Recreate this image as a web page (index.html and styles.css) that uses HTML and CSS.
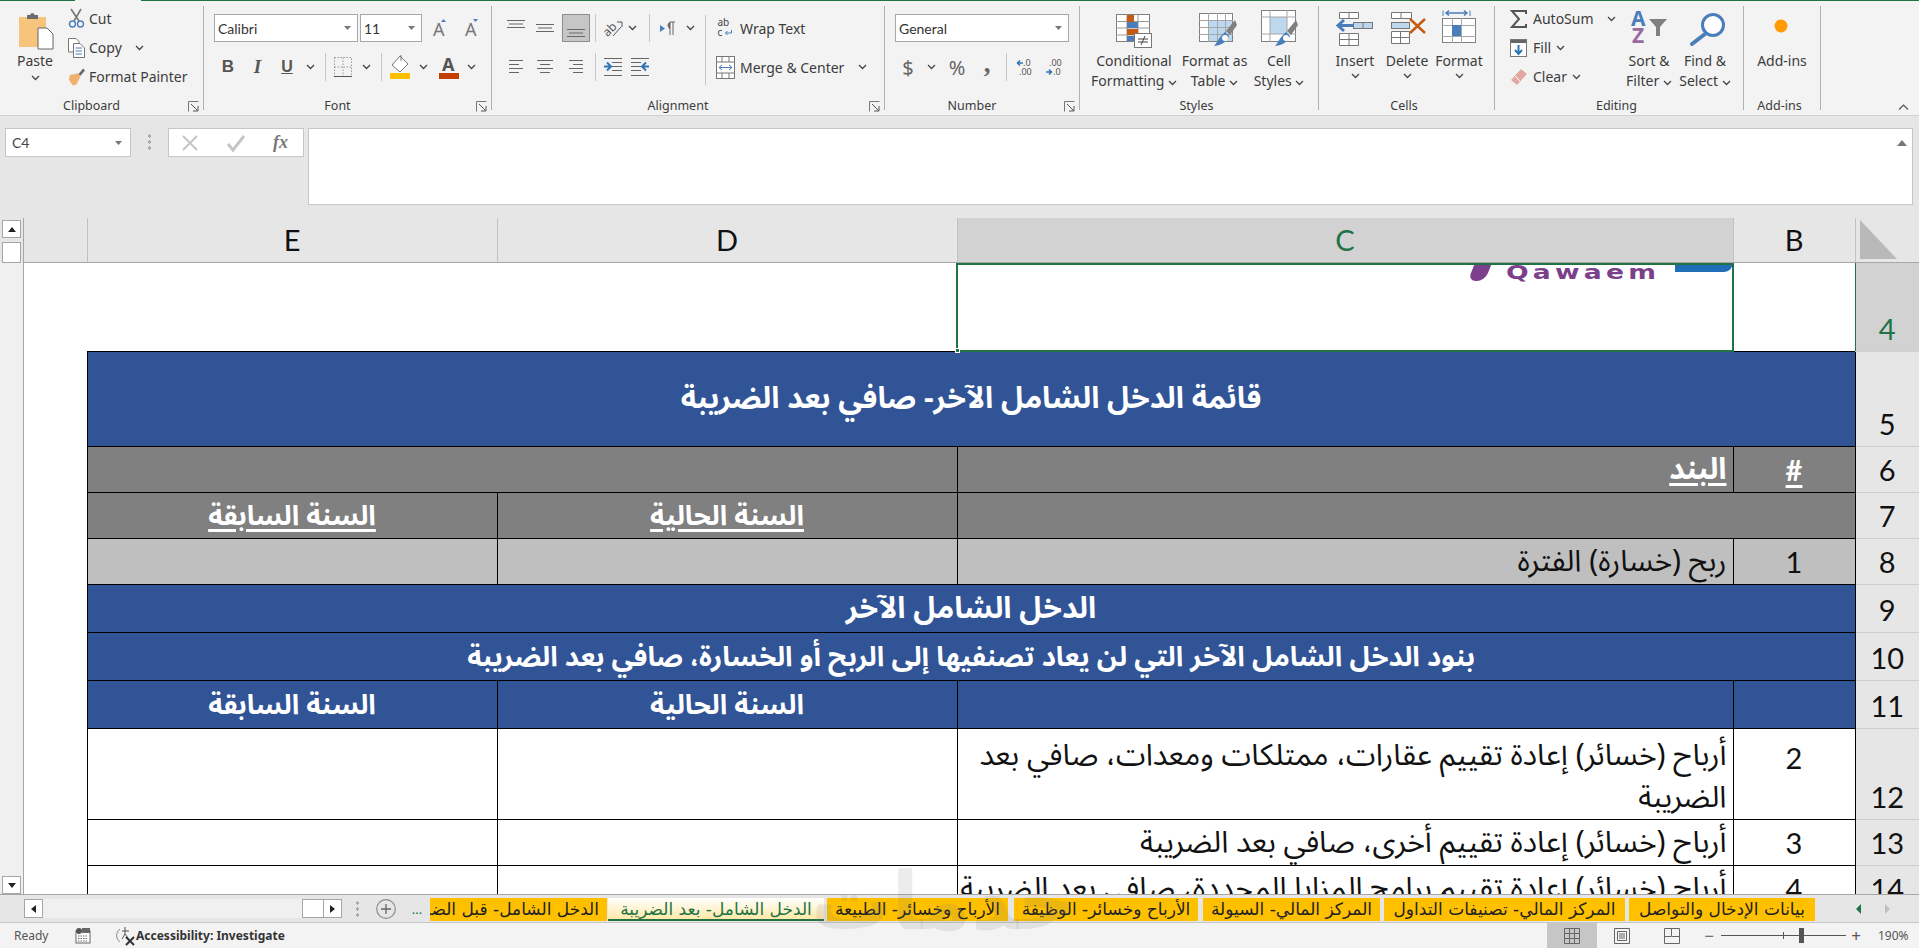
FILE: index.html
```html
<!DOCTYPE html>
<html lang="en">
<head>
<meta charset="utf-8">
<title>Excel</title>
<link rel="stylesheet" href="styles.css">
</head>
<body>
<svg class="defs" width="0" height="0">
  <symbol id="chev" viewBox="0 0 9 6"><polyline points="1,1 4.5,4.5 8,1" fill="none" stroke="#444" stroke-width="1.3"/></symbol>
  <symbol id="launch" viewBox="0 0 11 11"><path d="M.5 10.5V.5H10.5" fill="none" stroke="#777"/><path d="M3 3L9.5 9.5M10 5V10H5" fill="none" stroke="#555"/></symbol>
  <symbol id="tri" viewBox="0 0 7 4"><path d="M0 0H7L3.5 4Z" fill="#777"/></symbol>
  <symbol id="lines" viewBox="0 0 18 8"><path d="M0 .5H18M2 4H16M0 7.5H18" stroke="#666" fill="none"/></symbol>
  <symbol id="brush" viewBox="0 0 24 28"><path d="M22 1L13 12L17 16L24 6Z" fill="#808080"/><path d="M12 13L16 17C14 22 10 26 1 27C4 24 6 18 12 13Z" fill="#4a7ebb"/><circle cx="12" cy="19" r="3" fill="#fff"/></symbol>
</svg>

<div class="tabline"><span class="tl1"></span><span class="tl2"></span><span class="tl3"></span></div>

<section class="ribbon">
  <div class="group g-clip">
    <div class="gbody clipbody">
      <div class="big paste">
        <svg class="paste-ic" width="36" height="39" viewBox="0 0 36 39"><rect x="1" y="6" width="27" height="30" fill="#f6c47b"/><path d="M9 8V4H12Q14 0 17 4H20V8Z" fill="#6d6d6d"/><path d="M20 23H29L35 29V44H20Z" transform="translate(0 -6)" fill="#fff" stroke="#666"/></svg>
        <span class="lbl">Paste</span>
        <svg class="chev chev-b"><use href="#chev"/></svg>
      </div>
      <div class="smalls">
        <div class="sm"><svg class="sm-ic" width="17" height="19" viewBox="0 0 17 19"><path d="M3 0L11 12M13 0L6 12" stroke="#777" stroke-width="1.6" fill="none"/><circle cx="4.5" cy="15" r="3" fill="none" stroke="#4a7ebb" stroke-width="1.4"/><circle cx="12.5" cy="15" r="3" fill="none" stroke="#4a7ebb" stroke-width="1.4"/></svg><span>Cut</span></div>
        <div class="sm"><svg class="sm-ic" width="17" height="20" viewBox="0 0 17 20"><path d="M.5.5H8L11 3.5V14H.5Z" fill="#fff" stroke="#777"/><path d="M5.5 5.5H12L16.5 10V19.5H5.5Z" fill="#fff" stroke="#777"/><path d="M7.5 10H14M7.5 13H14M7.5 16H14" stroke="#4a7ebb"/></svg><span>Copy</span><svg class="chev chev-copy"><use href="#chev"/></svg></div>
        <div class="sm"><svg class="sm-ic" width="18" height="18" viewBox="0 0 18 18"><path d="M11 6L16 0L18 2L13 8Z" fill="#666"/><path d="M2 7L11 5L13 9L9 17L5 18L1 12Z" fill="#f0b070"/></svg><span>Format Painter</span></div>
      </div>
    </div>
    <div class="glabel"><span class="gname">Clipboard</span><svg class="launch"><use href="#launch"/></svg></div>
  </div>

  <div class="group g-font">
    <div class="gbody rows">
      <div class="font-r1">
        <div class="combo"><span>Calibri</span><svg class="tri"><use href="#tri"/></svg></div>
        <div class="combo"><span>11</span><svg class="tri"><use href="#tri"/></svg></div>
        <div class="c"><svg width="16" height="18" viewBox="0 0 16 18"><text class="aa" x="1" y="17">A</text><path d="M9 3L11.500 0L14 3Z" fill="#4a7ebb"/></svg></div>
        <div class="c"><svg width="16" height="18" viewBox="0 0 16 18"><text class="aa" x="1" y="17">A</text><path d="M9 0H14L11.500 3Z" fill="#4a7ebb"/></svg></div>
      </div>
      <div class="font-r2">
        <div class="c fb">B</div><div class="c fi">I</div><div class="c fu">U</div>
        <div class="c"><svg class="chev"><use href="#chev"/></svg></div>
        <div class="c vs"></div>
        <div class="c"><svg width="18" height="20" viewBox="0 0 18 20"><path d="M.5.5H17.500V19M.5 .5V19M9 .5V19M.5 10H17.500" stroke="#999" stroke-dasharray="1.500 1.500" fill="none"/><path d="M0 19.500H18" stroke="#555"/></svg></div>
        <div class="c"><svg class="chev"><use href="#chev"/></svg></div>
        <div class="c vs"></div>
        <div class="c"><svg width="20" height="24" viewBox="0 0 20 24"><path d="M10 1L18 9L10 17L2 10Z" fill="#fff" stroke="#777"/><path d="M11 0V6" stroke="#777"/><rect y="18" width="20" height="6" fill="#ffc000"/></svg></div>
        <div class="c"><svg class="chev"><use href="#chev"/></svg></div>
        <div class="c"><svg width="20" height="24" viewBox="0 0 20 24"><text class="ac" x="3" y="16">A</text><rect y="18" width="20" height="6" fill="#c43e00"/></svg></div>
        <div class="c"><svg class="chev"><use href="#chev"/></svg></div>
      </div>
    </div>
    <div class="glabel"><span class="gname">Font</span><svg class="launch"><use href="#launch"/></svg></div>
  </div>

  <div class="group g-align">
    <div class="gbody albody">
      <div class="rows">
        <div class="al-r1">
          <div class="c up"><svg class="ln"><use href="#lines"/></svg></div>
          <div class="c"><svg class="ln"><use href="#lines"/></svg></div>
          <div class="c sel dn"><svg class="ln"><use href="#lines"/></svg></div>
          <div class="c vs"></div>
          <div class="c"><svg width="19" height="19" viewBox="0 0 19 19"><text class="orient" transform="rotate(-45 7 12)" x="0" y="14">ab</text><path d="M9 17L17 8M13 3H18V8" stroke="#555" fill="none"/></svg></div>
          <div class="c"><svg class="chev"><use href="#chev"/></svg></div>
          <div class="c vs"></div>
          <div class="c"><svg width="15" height="13" viewBox="0 0 15 13"><path d="M0 3L5 6.500L0 10Z" fill="#4a7ebb"/><path d="M10 0H15M10 0V13M13 0V13M10 0Q6 3 10 7" stroke="#666" fill="#666"/></svg></div>
          <div class="c"></div>
          <div class="c"><svg class="chev"><use href="#chev"/></svg></div>
        </div>
        <div class="al-r2">
          <div class="c"><svg width="15" height="14" viewBox="0 0 15 14"><path d="M0 .5H14M0 4.500H10M0 8.500H14M0 12.500H10" stroke="#666"/></svg></div>
          <div class="c"><svg width="16" height="14" viewBox="0 0 16 14"><path d="M0 .5H16M3 4.500H13M0 8.500H16M3 12.500H13" stroke="#666"/></svg></div>
          <div class="c"><svg width="15" height="14" viewBox="0 0 15 14"><path d="M1 .5H15M5 4.500H15M1 8.500H15M5 12.500H15" stroke="#666"/></svg></div>
          <div class="c vs"></div>
          <div class="c"><svg width="18" height="19" viewBox="0 0 18 19"><path d="M0 .5H18M8 4.500H18M8 8.500H18M8 12.500H18M0 17.500H18" stroke="#666"/><path d="M0 8.500H6M3 4.500L7 8.500L3 12.500" stroke="#2f75b5" stroke-width="2" fill="none"/></svg></div>
          <div class="c"><svg width="18" height="19" viewBox="0 0 18 19"><path d="M0 .5H18M0 4.500H10M0 8.500H10M0 12.500H10M0 17.500H18" stroke="#666"/><path d="M18 8.500H12M15 4.500L11 8.500L15 12.500" stroke="#2f75b5" stroke-width="2" fill="none"/></svg></div>
        </div>
      </div>
      <div class="bigsep"></div>
      <div class="rows">
        <div class="wm"><svg class="wm-ic" width="16" height="20" viewBox="0 0 16 20"><text class="wt" x="0" y="8">ab</text><text class="wt" x="0" y="18">c</text><path d="M14 12V15H8M10 13L8 15L10 17" stroke="#4a7ebb" fill="none"/></svg><span>Wrap Text</span></div>
        <div class="wm"><svg class="wm-ic" width="19" height="23" viewBox="0 0 19 23"><rect x=".5" y=".5" width="18" height="22" fill="#fff" stroke="#777"/><path d="M0 6H19M0 17H19M6 .5V6M13 .5V6M6 17V23M13 17V23" stroke="#777"/><path d="M3 11.500H16M6 9L3 11.500L6 14M13 9L16 11.500L13 14" stroke="#4a7ebb" fill="none"/></svg><span>Merge &amp; Center</span><svg class="chev chev-merge"><use href="#chev"/></svg></div>
      </div>
    </div>
    <div class="glabel"><span class="gname">Alignment</span><svg class="launch"><use href="#launch"/></svg></div>
  </div>

  <div class="group g-num">
    <div class="gbody rows">
      <div class="combo combo-num"><span>General</span><svg class="tri"><use href="#tri"/></svg></div>
      <div class="num-r2">
        <div class="c sym">$</div>
        <div class="c"><svg class="chev"><use href="#chev"/></svg></div>
        <div class="c sym">%</div>
        <div class="c sym comma">,</div>
        <div class="c vs"></div>
        <div class="c"><svg width="16" height="17" viewBox="0 0 16 17"><text class="dec" x="6" y="7">.0</text><text class="dec" x="2" y="16">.00</text><path d="M6 4H1M3 1.500L.5 4L3 6.500" stroke="#2f75b5" stroke-width="1.500" fill="none"/></svg></div>
        <div class="c"><svg width="16" height="17" viewBox="0 0 16 17"><text class="dec" x="3" y="7">.00</text><text class="dec" x="7" y="16">.0</text><path d="M0 13H5M3 10.500L5.500 13L3 15.500" stroke="#2f75b5" stroke-width="1.500" fill="none"/></svg></div>
      </div>
    </div>
    <div class="glabel"><span class="gname">Number</span><svg class="launch"><use href="#launch"/></svg></div>
  </div>

  <div class="group g-styles">
    <div class="gbody bigs">
      <div class="big b-cf">
        <svg class="big-ic" width="44" height="41" viewBox="0 0 44 41"><rect x="4.500" y="4.500" width="33" height="27" fill="#fff" stroke="#808080"/><path d="M4 11.500H38M4 18H38M4 25H38M15 4V31M26 4V31" stroke="#999"/><rect x="15" y="5" width="7" height="7" fill="#c55a11"/><rect x="15" y="12" width="11" height="6" fill="#4a7ebb"/><rect x="15" y="19" width="11" height="6" fill="#c55a11"/><rect x="15" y="26" width="7" height="5" fill="#4a7ebb"/><rect x="22.500" y="23.500" width="17" height="14" fill="#fff" stroke="#777"/><path d="M26 29H36M26 32H36M33 26L29 35" stroke="#444" fill="none"/></svg>
        <span class="lbl">Conditional<br>Formatting <svg class="chev"><use href="#chev"/></svg></span>
      </div>
      <div class="big b-ft">
        <svg class="big-ic" width="44" height="41" viewBox="0 0 44 41"><rect x="6.500" y="3.500" width="33" height="28" fill="#fff" stroke="#808080"/><rect x="16" y="10" width="23" height="21" fill="#bdd7ee"/><path d="M6 10.500H40M6 17.500H40M6 24.500H40M15.500 3V32M24.500 3V32M32.500 3V32" stroke="#a6a6a6"/><svg x="20" y="9" width="24" height="28" viewBox="0 0 24 28"><use href="#brush"/></svg></svg>
        <span class="lbl">Format as<br>Table <svg class="chev"><use href="#chev"/></svg></span>
      </div>
      <div class="big b-cs">
        <svg class="big-ic" width="44" height="41" viewBox="0 0 44 41"><rect x="4.500" y=".5" width="34" height="31" fill="#fff" stroke="#808080"/><rect x="13" y="7" width="17" height="17" fill="#bdd7ee"/><path d="M4 7H39M4 24H39M13 0V32M30 0V32" stroke="#a6a6a6"/><svg x="17" y="9" width="24" height="28" viewBox="0 0 24 28"><use href="#brush"/></svg></svg>
        <span class="lbl">Cell<br>Styles <svg class="chev"><use href="#chev"/></svg></span>
      </div>
    </div>
    <div class="glabel"><span class="gname">Styles</span></div>
  </div>

  <div class="group g-cells">
    <div class="gbody bigs">
      <div class="big b-cell">
        <svg class="big-ic" width="44" height="41" viewBox="0 0 44 41"><path d="M6.500 2.500H25.500V8.500H6.500ZM16 2V8" fill="#fff" stroke="#777"/><rect x="20.500" y="12.500" width="19" height="6" fill="#bdd7ee" stroke="#777"/><path d="M30 12V18" stroke="#777"/><path d="M20 15.500H6M11 10L5 15.500L11 21" stroke="#4a7ebb" stroke-width="3" fill="none"/><path d="M6.500 23.500H25.500V35.500H6.500ZM16 23V36M6 29.500H26" fill="#fff" stroke="#777"/></svg>
        <span class="lbl">Insert</span><svg class="chev chev-c"><use href="#chev"/></svg>
      </div>
      <div class="big b-cell">
        <svg class="big-ic" width="44" height="41" viewBox="0 0 44 41"><path d="M6.500 2.500H26.500V8.500H6.500ZM16 2V8" fill="#fff" stroke="#777"/><rect x="6.500" y="12.500" width="18" height="6" fill="#bdd7ee" stroke="#777"/><path d="M6.500 21.500H24.500V33.500H6.500ZM15.500 21V34M6 27.500H25" fill="#fff" stroke="#777"/><path d="M25 9L40 23M40 9L25 23" stroke="#c55a11" stroke-width="2.500"/></svg>
        <span class="lbl">Delete</span><svg class="chev chev-c"><use href="#chev"/></svg>
      </div>
      <div class="big b-cell">
        <svg class="big-ic" width="44" height="41" viewBox="0 0 44 41"><path d="M6 .5V6M33 .5V6" stroke="#4a7ebb"/><path d="M9 3H30M12 .5L9 3L12 5.500M27 .5L30 3L27 5.500" stroke="#4a7ebb" stroke-width="1.500" fill="none"/><rect x="5.500" y="8.500" width="33" height="24" fill="#fff" stroke="#808080"/><path d="M5 15.500H39M5 26.500H39M15.500 8V33M24.500 8V33" stroke="#a6a6a6"/><rect x="15" y="15" width="9" height="11" fill="#4a7ebb"/></svg>
        <span class="lbl">Format</span><svg class="chev chev-c"><use href="#chev"/></svg>
      </div>
    </div>
    <div class="glabel"><span class="gname">Cells</span></div>
  </div>

  <div class="group g-edit">
    <div class="gbody editbody">
      <div class="smalls ed-smalls">
        <div class="sm"><svg class="sm-ed" width="17" height="18" viewBox="0 0 17 18"><path d="M16 4V1H2L9 9L2 17H16V14" fill="none" stroke="#555" stroke-width="2"/></svg><span>AutoSum</span><svg class="chev chev-auto"><use href="#chev"/></svg></div>
        <div class="sm"><svg class="sm-ed" width="17" height="18" viewBox="0 0 17 18"><rect x=".5" y=".5" width="16" height="17" fill="#fff" stroke="#777"/><rect x="1" y="1" width="15" height="3" fill="#666"/><path d="M8.500 6V15M5 11L8.500 15L12 11" stroke="#2f75b5" stroke-width="2" fill="none"/></svg><span>Fill</span><svg class="chev chev-s"><use href="#chev"/></svg></div>
        <div class="sm"><svg class="sm-ed" width="17" height="18" viewBox="0 0 17 18"><path d="M11 1L17 6L7 17L1 12Z" fill="#e0a8a0"/><path d="M5 8L10 13" stroke="#fff"/></svg><span>Clear</span><svg class="chev chev-s"><use href="#chev"/></svg></div>
      </div>
      <div class="big b-sort">
        <svg class="big-ic" width="44" height="41" viewBox="0 0 44 41"><text class="az-a" x="4" y="16">A</text><text class="az-z" x="5" y="33">Z</text><path d="M22 9H40L33 17V26H29V17Z" fill="#808080"/></svg>
        <span class="lbl">Sort &amp;<br>Filter <svg class="chev"><use href="#chev"/></svg></span>
      </div>
      <div class="big b-find">
        <svg class="big-ic" width="44" height="41" viewBox="0 0 44 41"><circle cx="30" cy="15" r="10.500" fill="#fff" stroke="#4a7ebb" stroke-width="3"/><path d="M22 24L9 34" stroke="#4a7ebb" stroke-width="4" stroke-linecap="round"/></svg>
        <span class="lbl">Find &amp;<br>Select <svg class="chev"><use href="#chev"/></svg></span>
      </div>
    </div>
    <div class="glabel"><span class="gname">Editing</span></div>
  </div>

  <div class="group g-add">
    <div class="gbody bigs">
      <div class="big b-add">
        <svg class="big-ic" width="44" height="41" viewBox="0 0 44 41"><circle cx="21" cy="16" r="6.500" fill="#ff9a00"/></svg>
        <span class="lbl">Add-ins</span>
      </div>
    </div>
    <div class="glabel"><span class="gname">Add-ins</span></div>
  </div>
  <div class="collapse"><svg width="11" height="6" viewBox="0 0 11 6"><polyline points="1,5.500 5.500,1 10,5.500" fill="none" stroke="#555" stroke-width="1.200"/></svg></div>
</section>

<section class="fbar">
  <div class="namebox"><span>C4</span><svg class="tri"><use href="#tri"/></svg></div>
  <div class="dots dots-f"></div>
  <div class="fxbox">
    <svg width="16" height="16" viewBox="0 0 16 16"><path d="M1 1L15 15M15 1L1 15" stroke="#c6c6c6" stroke-width="2"/></svg>
    <svg width="18" height="16" viewBox="0 0 18 16"><path d="M1 9L6 15L17 1" stroke="#c6c6c6" stroke-width="3" fill="none"/></svg>
    <span class="fx">fx</span>
  </div>
  <div class="finput"><svg width="10" height="6" viewBox="0 0 10 6"><path d="M0 6L5 0L10 6Z" fill="#777"/></svg></div>
</section>

<main class="main">
  <div class="vscroll">
    <div class="sbtn"><svg width="8" height="5" viewBox="0 0 8 5"><path d="M0 5H8L4 0Z" fill="#222"/></svg></div>
    <div class="vthumb"></div>
    <div class="grow"></div>
    <div class="sbtn"><svg width="8" height="5" viewBox="0 0 8 5"><path d="M0 0H8L4 5Z" fill="#222"/></svg></div>
  </div>
  <div class="sheet">
    <table class="grid">
      <colgroup><col class="ca"><col class="ce"><col class="cd"><col class="cc"><col class="cb"><col class="cr"></colgroup>
      <tr class="h-head">
        <th class="colh blank"></th><th class="colh">E</th><th class="colh">D</th><th class="colh active">C</th><th class="colh">B</th>
        <th class="corner"><svg width="38" height="39" viewBox="0 0 38 39"><path d="M0 0L37 39H0Z" fill="#b9b9b9"/></svg></th>
      </tr>
      <tr class="h4">
        <td class="plain"></td><td class="plain"></td><td class="plain"></td>
        <td class="plain selcell">
          <div class="logo"><span class="swoosh"></span><span class="qaw">Qawaem</span><span class="lblue"></span></div>
          <div class="selbox"><span class="handle"></span></div>
        </td>
        <td class="plain"></td><th class="rowh active">4</th>
      </tr>
      <tr class="h5"><td class="plain"></td><td colspan="4" class="blue title" dir="rtl">قائمة الدخل الشامل الآخر- صافي بعد الضريبة</td><th class="rowh">5</th></tr>
      <tr class="h46"><td class="plain"></td><td colspan="2" class="grey"></td><td class="grey r b" dir="rtl"><u>البند</u></td><td class="grey ctr b n"><u>#</u></td><th class="rowh">6</th></tr>
      <tr class="h46"><td class="plain"></td><td class="grey ctr b sub" dir="rtl"><u>السنة السابقة</u></td><td class="grey ctr b sub" dir="rtl"><u>السنة الحالية</u></td><td colspan="2" class="grey"></td><th class="rowh">7</th></tr>
      <tr class="h46"><td class="plain"></td><td class="lg"></td><td class="lg"></td><td class="lg r" dir="rtl">ربح (خسارة) الفترة</td><td class="lg ctr n">1</td><th class="rowh">8</th></tr>
      <tr class="h48"><td class="plain"></td><td colspan="4" class="blue ctr b" dir="rtl">الدخل الشامل الآخر</td><th class="rowh">9</th></tr>
      <tr class="h48"><td class="plain"></td><td colspan="4" class="blue ctr b long" dir="rtl">بنود الدخل الشامل الآخر التي لن يعاد تصنفيها إلى الربح أو الخسارة، صافي بعد الضريبة</td><th class="rowh">10</th></tr>
      <tr class="h48"><td class="plain"></td><td class="blue ctr b sub" dir="rtl">السنة السابقة</td><td class="blue ctr b sub" dir="rtl">السنة الحالية</td><td class="blue"></td><td class="blue"></td><th class="rowh">11</th></tr>
      <tr class="h91"><td class="plain"></td><td class="wh"></td><td class="wh"></td><td class="wh r two" dir="rtl">أرباح (خسائر) إعادة تقييم عقارات، ممتلكات ومعدات، صافي بعد<br>الضريبة</td><td class="wh ctr top n">2</td><th class="rowh">12</th></tr>
      <tr class="h46"><td class="plain"></td><td class="wh"></td><td class="wh"></td><td class="wh r" dir="rtl">أرباح (خسائر) إعادة تقييم أخرى، صافي بعد الضريبة</td><td class="wh ctr n">3</td><th class="rowh">13</th></tr>
      <tr class="h46"><td class="plain"></td><td class="wh"></td><td class="wh"></td><td class="wh r" dir="rtl">أرباح (خسائر) إعادة تقييم برامج المزايا المحددة، صافي بعد الضريبة</td><td class="wh ctr n">4</td><th class="rowh">14</th></tr>
    </table>
  </div>
</main>

<section class="tabbar">
  <div class="sbtn sbtn-h"><svg width="5" height="8" viewBox="0 0 5 8"><path d="M5 0V8L0 4Z" fill="#222"/></svg></div>
  <div class="htrack"></div>
  <div class="hthumb"></div>
  <div class="sbtn sbtn-h"><svg width="5" height="8" viewBox="0 0 5 8"><path d="M0 0V8L5 4Z" fill="#222"/></svg></div>
  <div class="dots dots-t"></div>
  <svg class="plus" width="20" height="20" viewBox="0 0 20 20"><circle cx="10" cy="10" r="9.300" fill="none" stroke="#8c8c8c" stroke-width="1.200"/><path d="M10 5V15M5 10H15" stroke="#666" stroke-width="1.300"/></svg>
  <span class="more">...</span>
  <div class="tabs" dir="ltr">
    <div class="tab t7" dir="rtl">الدخل الشامل- قبل الضريبة</div>
    <div class="tab tab-active t6" dir="rtl">الدخل الشامل- بعد الضريبة</div>
    <div class="tab t5" dir="rtl">الأرباح وخسائر- الطبيعة</div>
    <div class="tab t4" dir="rtl">الأرباح وخسائر- الوظيفة</div>
    <div class="tab t3" dir="rtl">المركز المالي- السيولة</div>
    <div class="tab t2" dir="rtl">المركز المالي- تصنيفات التداول</div>
    <div class="tab t1" dir="rtl">بيانات الإدخال والتواصل</div>
  </div>
  <svg class="tabnav" width="5" height="10" viewBox="0 0 5 10"><path d="M5 0V10L0 5Z" fill="#217346"/></svg>
  <svg class="tabnav tabnav2" width="5" height="10" viewBox="0 0 5 10"><path d="M0 0V10L5 5Z" fill="#bfbfbf"/></svg>
</section>

<footer class="status">
  <span class="ready">Ready</span>
  <svg class="st-macro" width="14" height="15" viewBox="0 0 14 15"><rect y="3" width="14" height="12" fill="#fff" stroke="#666"/><circle cx="3" cy="3" r="3" fill="#555"/><rect x="6" width="8" height="5" fill="#666"/><path d="M2 8H12M2 10.500H12M2 13H12" stroke="#666" stroke-dasharray="1.500 1"/></svg>
  <svg class="st-acc" width="20" height="19" viewBox="0 0 20 19"><path d="M5 3A8 8 0 0 0 5 16" fill="none" stroke="#888"/><path d="M10 1V8M7 5H14M10 8L7 13M10 8L13 12" stroke="#555" fill="none"/><path d="M11 11L19 19M19 11L11 19" stroke="#333" stroke-width="2"/></svg>
  <b class="acc">Accessibility: Investigate</b>
  <div class="grow"></div>
  <div class="view view-on"><svg width="16" height="16" viewBox="0 0 16 16"><path d="M.5.5H15.500V15.500H.5ZM5.500 0V16M10.500 0V16M0 5.500H16M0 10.500H16" fill="none" stroke="#666"/></svg></div>
  <div class="view"><svg width="16" height="16" viewBox="0 0 16 16"><path d="M.5.5H15.500V15.500H.5Z" fill="none" stroke="#666"/><path d="M3.500 3.500H12.500V12.500H3.500ZM5 6H11M5 8H11M5 10H11" fill="none" stroke="#666"/></svg></div>
  <div class="view"><svg width="16" height="16" viewBox="0 0 16 16"><path d="M.5.5H15.500V15.500H.5ZM7.500 0V8.500H0M8 8.500H16" fill="none" stroke="#666"/></svg></div>
  <div class="zoomer">
    <span class="zbtn">−</span>
    <div class="slider"><span class="mid"></span><span class="knob"></span></div>
    <span class="zbtn">+</span>
    <span class="pct">190%</span>
  </div>
</footer>

<div class="watermark" dir="rtl">خدمات</div>
</body>
</html>
```
FILE: styles.css
```css
* { box-sizing: border-box; }
html, body { margin: 0; padding: 0; }
body {
  position: relative;
  width: 1919px;
  height: 948px;
  overflow: hidden;
  background: #f3f3f3;
  font-family: "Noto Sans", "DejaVu Sans", sans-serif;
  font-size: 14px;
  color: #3c3c3c;
  display: flex;
  flex-direction: column;
}
svg { overflow: visible; }
.defs { position: absolute; }
.chev { width: 9px; height: 6px; }
.launch { width: 11px; height: 11px; margin-right: 4px; }
.tri { width: 7px; height: 4px; }
.grow { flex: 1; }
svg text { font-family: "Noto Sans", sans-serif; }

.tabline { display: flex; height: 1px; flex: none; }
.tl1 { width: 75px; background: #217346; }
.tl2 { width: 66px; }
.tl3 { flex: 1; background: #217346; }

.ribbon {
  flex: none;
  height: 115px;
  display: flex;
  padding-top: 5px;
  background: #f3f3f3;
  border-bottom: 1px solid #d2d2d2;
  align-items: flex-start;
}
.group {
  height: 104px;
  display: flex;
  flex-direction: column;
  border-right: 1px solid #b1b1b1;
}
.g-clip { width: 204px; }
.g-font { width: 288px; }
.g-align { width: 393px; }
.g-num { width: 195px; }
.g-styles { width: 239px; }
.g-cells { width: 176px; }
.g-edit { width: 249px; }
.g-add { width: 77px; }
.gbody { height: 95px; flex: none; }
.glabel { height: 10px; display: flex; align-items: center; line-height: 10px; font-size: 12.5px; }
.gname { flex: 1; text-align: center; white-space: nowrap; padding-right: 5px; }
.collapse { flex: 1; display: flex; justify-content: flex-end; padding: 98px 10px 0 0; }

.rows { display: grid; grid-template-rows: 28px 28px; row-gap: 11px; padding-top: 8px; align-content: start; }
.c { display: flex; align-items: center; justify-content: center; min-width: 0; }
.vs::after { content: ""; width: 1px; height: 28px; background: #c6c6c6; }

.big { display: flex; flex-direction: column; align-items: center; text-align: center; flex: none; padding-top: 4px; }
.big-ic { height: 41px; flex: none; }
.lbl { line-height: 20px; white-space: nowrap; }
.bigs { display: flex; }

/* Clipboard */
.clipbody { display: flex; }
.paste { width: 66px; margin-left: 2px; }
.paste-ic { height: 41px; margin-left: 1px; }
.chev-b { margin-top: 4px; }
.smalls { display: grid; grid-template-rows: repeat(3, 29px); margin-top: -2px; }
.sm { display: flex; align-items: center; white-space: nowrap; }
.sm-ic { width: 21px; flex: none; padding-right: 4px; }
.chev-copy { margin-left: 13px; }

/* Font */
.g-font .rows { padding-left: 10px; }
.font-r1 { display: grid; grid-template-columns: 144px 62px 31px 29px; column-gap: 2px; }
.font-r2 { display: grid; grid-template-columns: 28px 31px 28px 18px 12px 24px 22px 8px 30px 16px 36px 8px; }
.combo {
  display: flex; align-items: center; justify-content: space-between;
  background: #fff; border: 1px solid #a8a8a8; padding: 0 6px 0 3px;
  font-family: "Lato", sans-serif; font-size: 14px; color: #333;
}
.combo-num { width: 174px; }
.g-num .rows { padding-left: 10px; }
.aa { font-size: 18px; fill: #777; }
.ac { font-size: 18px; font-weight: 700; fill: #555; }
.fb { font-family: "Liberation Sans", sans-serif; font-weight: 700; font-size: 17px; color: #555; }
.fi { font-family: "Liberation Serif", serif; font-style: italic; font-weight: 700; font-size: 19px; color: #555; }
.fu { font-family: "Liberation Sans", sans-serif; font-weight: 700; font-size: 16px; color: #555; text-decoration: underline; }

/* Alignment */
.albody { display: flex; padding-left: 10px; }
.al-r1 { display: grid; grid-template-columns: 28px 1px 28px 3px 28px 10px 26px 12px 22px 15px 8px 14px; }
.al-r1 > .c:nth-child(1) { grid-column: 1; }
.al-r1 > .c:nth-child(2) { grid-column: 3; }
.al-r1 > .c:nth-child(3) { grid-column: 5; }
.al-r1 > .c:nth-child(4) { grid-column: 6; }
.al-r1 > .c:nth-child(5) { grid-column: 7; }
.al-r1 > .c:nth-child(6) { grid-column: 8; }
.al-r1 > .c:nth-child(7) { grid-column: 9; }
.al-r1 > .c:nth-child(8) { grid-column: 10; }
.al-r1 > .c:nth-child(9) { grid-column: 11; }
.al-r1 > .c:nth-child(10) { grid-column: 12; }
.al-r2 { display: grid; grid-template-columns: 28px 30px 30px 10px 26px 27px; }
.ln { width: 18px; height: 8px; }
.up { align-items: flex-start; padding-top: 6px; }
.dn { align-items: flex-end; padding-bottom: 4px; }
.sel { background: #c6c6c6; border: 1px solid #8c8c8c; }
.orient { font-size: 12px; fill: #555; }
.bigsep { width: 1px; height: 70px; margin: 9px 10px 0 8px; background: #c6c6c6; }
.wm { display: flex; align-items: center; white-space: nowrap; }
.wm-ic { width: 24px; flex: none; padding-right: 5px; }
.wt { font-size: 10px; fill: #444; }
.chev-merge { margin-left: 14px; }

/* Number */
.num-r2 { display: grid; grid-template-columns: 26px 20px 32px 28px 10px 28px 30px; }
.sym { font-size: 20px; color: #666; }
.comma { font-family: "Liberation Serif", serif; font-weight: 700; font-size: 27px; line-height: 20px; align-items: flex-start; }
.dec { font-size: 9px; fill: #555; }

/* Styles */
.g-styles .bigs { padding-left: 14px; }
.b-cf { width: 80px; }
.b-ft { width: 81px; }
.b-cs { width: 48px; }
.g-cells .bigs { padding-left: 10px; }
.b-cell { width: 52px; }
.chev-c { margin-top: 2px; }

/* Editing */
.editbody { display: flex; }
.ed-smalls { width: 127px; padding-left: 15px; flex: none; }
.sm-ed { width: 23px; flex: none; padding-right: 6px; }
.chev-auto { margin-left: 13px; }
.chev-s { margin-left: 5px; }
.b-sort { width: 54px; }
.b-find { width: 58px; }
.b-add { width: 76px; }
.az-a { font-size: 21px; font-weight: 700; fill: #4a7ebb; }
.az-z { font-size: 21px; font-weight: 700; fill: #9a6a9e; }

/* Formula bar */
.fbar {
  flex: none; height: 102px; background: #e6e6e6;
  display: flex; align-items: flex-start; padding: 12px 6px 0 5px;
}
.namebox {
  width: 126px; height: 29px; background: #fff; border: 1px solid #c6c6c6;
  display: flex; align-items: center; justify-content: space-between; padding: 0 8px 0 6px;
  font-family: "Lato", sans-serif; font-size: 14px; color: #444;
}
.dots { width: 3px; background: radial-gradient(circle, #aaa 1.5px, transparent 1.6px) 0 0 / 3px 6px repeat-y; }
.dots-f { height: 18px; margin: 5px 17px 0 17px; }
.fxbox {
  width: 136px; height: 29px; background: #fff; border: 1px solid #c6c6c6;
  display: flex; align-items: center; justify-content: space-between; padding: 0 15px 0 13px;
}
.fx { font-family: "Liberation Serif", serif; font-style: italic; font-weight: 700; font-size: 18px; color: #777; }
.finput {
  margin-left: 4px; flex: 1; height: 77px; background: #fff; border: 1px solid #c6c6c6;
  display: flex; justify-content: flex-end; padding: 11px 5px 0 0; align-items: flex-start;
}

/* Main */
.main { flex: none; height: 676px; display: flex; background: #e6e6e6; }
.vscroll { width: 24px; flex: none; display: flex; flex-direction: column; padding: 2px 3px 0 2px; background: linear-gradient(#e6e6e6 44px, #f0f0f0 44px); border-right: 1px solid #a6a6a6; }
.sbtn { width: 19px; height: 18px; flex: none; background: #fff; border: 1px solid #a6a6a6; display: flex; align-items: center; justify-content: center; }
.vthumb { width: 19px; height: 21px; flex: none; margin-top: 4px; background: #fff; border: 1px solid #a6a6a6; }
.sheet { flex: 1; overflow: hidden; height: 676px; }
.grid { width: 1895px; border-collapse: collapse; table-layout: fixed; font-family: "Noto Sans Arabic", "DejaVu Sans", sans-serif; }
.ca { width: 63px; } .ce { width: 410px; } .cd { width: 460px; } .cc { width: 776px; } .cb { width: 122px; } .cr { width: 64px; }
.h-head { height: 44px; } .h4 { height: 89px; } .h5 { height: 95px; } .h46 { height: 46px; } .h48 { height: 48px; } .h91 { height: 91px; }
.grid td { padding: 0 6px; font-size: 30px; line-height: 40px; overflow: hidden; white-space: nowrap; color: #111; border: 1px solid #000; }
.grid td.n { font-family: "Lato", sans-serif; font-size: 29px; }
.grid td.sub { font-size: 27.5px; }
.grid td.long { font-size: 27.5px; }
.colh {
  background: #e6e6e6; font: 400 29px/44px "Lato", sans-serif; color: #111; padding: 0;
  border-left: 1px solid #c2c2c2; border-bottom: 1px solid #a6a6a6;
}
.colh.blank { border-left: 0; }
.colh.active { background: #d2d2d2; color: #217346; }
.corner { background: #e6e6e6; padding: 2px 0 0 4px; text-align: left; vertical-align: top; border-left: 1px solid #c2c2c2; line-height: 0; border-bottom: 1px solid #a6a6a6; }
.rowh {
  background: #e6e6e6; font: 400 29px/36px "Lato", sans-serif; color: #111; padding: 0 0 4px;
  vertical-align: bottom; text-align: center; border-bottom: 1px solid #cfcfcf; border-top: 0;
}
.rowh.active { background: #d2d2d2; color: #217346; border-left: 1px solid #217346; }
.grid td.plain { background: #fff; border: 0; }
.blue { background: #305496; color: #fff; }
.grid td.blue, .grid td.grey { color: #fff; }
.grey { background: #808080; }
.lg { background: #bfbfbf; }
.wh { background: #fff; }
.r { text-align: right; }
.ctr { text-align: center; }
.b { font-weight: 700; }
.title { text-align: center; font-weight: 700; }
.grid td.two { line-height: 42px; vertical-align: middle; padding-top: 5px; }
.top { vertical-align: top; }
.grid td.top { padding-top: 9px; }
.grid u { text-decoration-thickness: 3px; text-underline-offset: 4px; }

.grid td.selcell { position: relative; overflow: visible; }
.selbox { position: absolute; left: -1px; right: -1px; top: 0; bottom: -1px; border: 2px solid #217346; }
.handle { position: absolute; left: -3px; bottom: -3px; width: 5px; height: 5px; background: #217346; border: 1px solid #fff; }
.logo { position: absolute; left: 0; right: 0; top: 0; height: 20px; overflow: hidden; }
.qaw { position: absolute; left: 549px; top: -4px; font: 700 19px/26px "DejaVu Sans", sans-serif; letter-spacing: 3px; color: #7b3f8c; transform: scaleX(1.4); transform-origin: left center; }
.swoosh { position: absolute; left: 516px; top: -8px; width: 17px; height: 26px; background: #7b3f8c; border-radius: 8px 2px 8px 8px; transform: skewX(-22deg); }
.lblue { position: absolute; right: 0; top: 0; width: 58px; height: 9px; background: #1f6fb8; border-bottom-right-radius: 24px; }

/* Tabs */
.tabbar {
  flex: none; height: 29px; background: #e6e6e6;
  border-top: 1px solid #a6a6a6; border-bottom: 1px solid #c6c6c6;
  display: flex; align-items: flex-start; padding: 4px 0 0 24px;
}
.sbtn-h { width: 19px; height: 19px; }
.htrack { width: 259px; height: 19px; background: #f0f0f0; }
.hthumb { width: 21px; height: 19px; background: #fff; border: 1px solid #a6a6a6; border-right: 0; }
.dots-t { height: 18px; margin: 1px 14px 0 14px; }
.plus { margin: 0 0 0 3px; }
.more { width: 34px; text-align: center; color: #217346; font-size: 13px; line-height: 20px; margin-left: 4px; }
.tabs { display: flex; margin-top: -1px; width: 1386px; flex: none; margin-left: -4px; }
.tab {
  height: 23px; line-height: 22px; background: #ffc000; color: #222; text-align: center;
  font-family: "DejaVu Sans", sans-serif; font-size: 17px; overflow: hidden; white-space: nowrap; flex: none;
}
.tab-active { background: linear-gradient(#fff, #ffe9a8); color: #217346; border-bottom: 2px solid #217346; }
.t7 { width: 177px; margin-right: 1px; text-align: right; padding-right: 8px; }
.t6 { width: 216px; margin-right: 3px; }
.t5 { width: 181px; margin-right: 6px; }
.t4 { width: 184px; margin-right: 5px; }
.t3 { width: 177px; margin-right: 4px; }
.t2 { width: 241px; margin-right: 4px; }
.t1 { width: 186px; }
.tabnav { margin: 5px 0 0 40px; }
.tabnav2 { margin-left: 24px; }

/* Status */
.status { flex: 1; display: flex; align-items: center; background: #f3f3f3; font-size: 12px; }
.ready { margin-left: 14px; width: 62px; color: #555; }
.st-acc { margin-left: 25px; }
.acc { color: #333; font-weight: 700; font-size: 12px; margin-left: 1px; }
.view { width: 50px; height: 25px; display: flex; align-items: center; justify-content: center; }
.view-on { background: #c6c6c6; }
.zoomer { display: flex; align-items: center; width: 222px; padding-left: 5px; }
.zbtn { width: 14px; text-align: center; font-size: 17px; color: #555; line-height: 17px; }
.slider { position: relative; width: 125px; height: 1px; background: #555; margin: 0 3px 0 5px; }
.mid { position: absolute; left: 62px; top: -3px; width: 1px; height: 7px; background: #555; }
.knob { position: absolute; left: 78px; top: -7px; width: 5px; height: 15px; background: #555; }
.pct { margin-left: 15px; color: #555; white-space: nowrap; }

.watermark {
  position: absolute; left: 845px; top: 862px; width: 230px; text-align: center;
  font-family: "DejaVu Sans", sans-serif; font-weight: 700; font-size: 80px; line-height: 80px;
  color: rgba(120, 120, 120, .14); pointer-events: none; white-space: nowrap;
}
```
